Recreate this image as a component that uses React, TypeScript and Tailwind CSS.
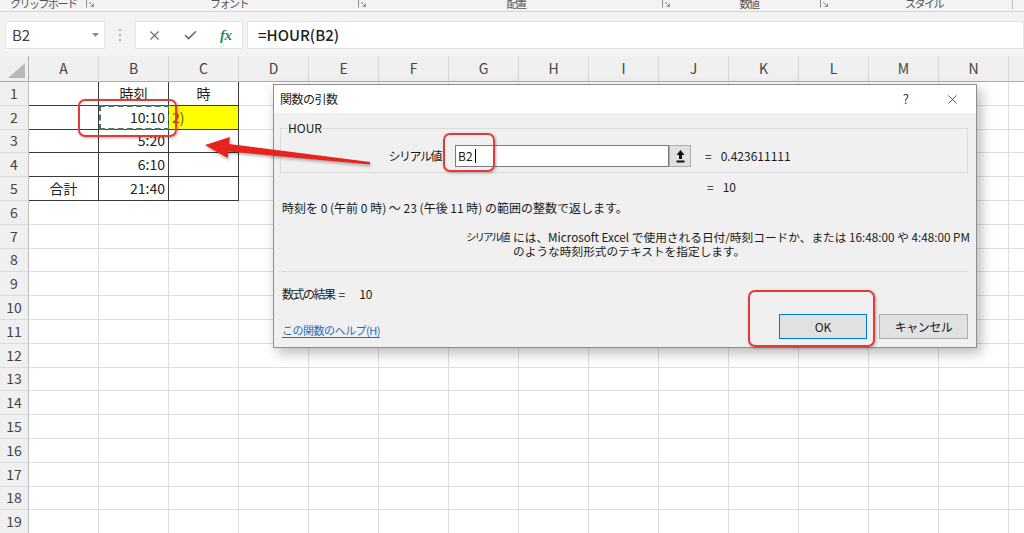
import { X, Check } from "lucide-react";
import clsx from "clsx";

const COLS = ["A", "B", "C", "D", "E", "F", "G", "H", "I", "J", "K", "L", "M", "N", "O"];
const ROWS = Array.from({ length: 19 }, (_, i) => i + 1);

type Align = "left" | "center" | "right";
const cells: Record<string, { text: string; align: Align }> = {
  B1: { text: "時刻", align: "center" },
  C1: { text: "時", align: "center" },
  B2: { text: "10:10", align: "right" },
  B3: { text: "5:20", align: "right" },
  B4: { text: "6:10", align: "right" },
  A5: { text: "合計", align: "center" },
  B5: { text: "21:40", align: "right" },
};

const alignClass: Record<Align, string> = {
  left: "justify-start",
  center: "justify-center",
  right: "justify-end",
};

const Launcher = ({ className }: { className?: string }) => (
  <svg className={className} width="9" height="9" viewBox="0 0 9 9">
    <path d="M0.5 8.5V0.5H8.5" fill="none" stroke="#8a8a8a" strokeWidth="1" />
    <path d="M3 3L7.5 7.5M7.5 4.5V7.5H4.5" fill="none" stroke="#8a8a8a" strokeWidth="1" />
  </svg>
);

const Ribbon = () => (
  <div className="h-[12px] bg-[#f3f3f3] border-b border-[#d4d4d4] overflow-hidden text-[11px] leading-[12px] tracking-[-1.5px] text-[#555]">
    <div className="flex items-start -mt-[3px] whitespace-nowrap">
      <span className="ml-[10px] w-[62px] text-center">クリップボード</span>
      <Launcher className="ml-[14px] mt-[2px]" />
      <span className="ml-[115px] w-[32px] text-center">フォント</span>
      <Launcher className="ml-[116px] mt-[2px]" />
      <span className="ml-[138px] w-[22px] text-center">配置</span>
      <Launcher className="ml-[135px] mt-[2px]" />
      <span className="ml-[67px] w-[22px] text-center">数値</span>
      <Launcher className="ml-[60px] mt-[2px]" />
      <span className="ml-[76px] w-[35px] text-center">スタイル</span>
      <span className="ml-[72px] w-px h-[12px] bg-[#bdbdbd]" />
    </div>
  </div>
);

const FormulaBar = () => (
  <div className="h-[44px] bg-[#f3f3f3] flex items-start pt-[9px]">
    <div className="ml-[5px] w-[100px] h-[28px] bg-white border border-[#e4e4e4] flex items-center pl-[6px] pr-[5px] text-[15px] text-[#444]">
      <span>B2</span>
      <svg className="ml-auto" width="7" height="4" viewBox="0 0 7 4">
        <path d="M0 0H7L3.5 4Z" fill="#8a8a8a" />
      </svg>
    </div>
    <div className="w-[30px] h-[28px] flex flex-col items-center justify-center gap-[3px]">
      <span className="w-[2px] h-[2px] bg-[#b0b0b0]" />
      <span className="w-[2px] h-[2px] bg-[#b0b0b0]" />
      <span className="w-[2px] h-[2px] bg-[#b0b0b0]" />
    </div>
    <div className="w-[108px] h-[28px] bg-white border border-[#e4e4e4] flex items-center">
      <X size={15} strokeWidth={1.7} className="ml-[11px] text-[#6a6a6a]" />
      <Check size={15} strokeWidth={2.6} className="ml-[21px] text-[#6a6a6a]" />
      <span className="ml-[22px] font-['Liberation_Serif',serif] italic text-[15px] font-semibold text-[#2f8a62] tracking-[-0.5px]">
        fx
      </span>
    </div>
    <div className="ml-[4px] flex-1 h-[28px] bg-white border border-[#e4e4e4] flex items-center pl-[10px] text-[15px] font-medium text-[#222]">
      =HOUR(B2)
    </div>
  </div>
);

const HeaderRow = () => (
  <div className="grid grid-cols-[29px_repeat(15,70px)] h-[26px]">
    <div className="relative bg-[#f0f0f0] border-r border-b border-[#ababab]">
      <svg className="absolute right-[3px] bottom-[3px]" width="17" height="15" viewBox="0 0 17 15">
        <path d="M17 0V15H0Z" fill="#b9b9b9" />
      </svg>
    </div>
    {COLS.map((c) => (
      <div
        key={c}
        className="flex items-center justify-center bg-[#f0f0f0] border-r border-b border-r-[#d6d6d6] border-b-[#ababab] text-[14px] text-[#444]"
      >
        {c}
      </div>
    ))}
  </div>
);

const Cell = ({ col, row }: { col: string; row: number }) => {
  const key = `${col}${row}`;
  const data = cells[key];
  const inTable = row <= 5 && (col === "A" || col === "B" || col === "C");
  return (
    <div
      className={clsx(
        "relative flex items-center border-r border-b px-[3px] text-[14px] text-[#222] whitespace-nowrap",
        inTable ? "border-[#3a3a3a]" : "border-[#dedede]",
        alignClass[data?.align ?? "left"],
        key === "C2" && "bg-[#ffff00]"
      )}
    >
      {data?.text}
      {key === "C2" && <span className="text-[#6e5410]">2)</span>}
      {key === "B2" && (
        <div className="absolute left-0 top-[-1px] w-[71px] h-[25px] border-2 border-dashed border-[#4a7560]" />
      )}
    </div>
  );
};

const SheetRow = ({ row }: { row: number }) => (
  <div className="grid grid-cols-[29px_repeat(15,70px)] h-[23.8px]">
    <div className="flex items-center justify-center bg-[#f0f0f0] border-r border-b border-r-[#bdbdbd] border-b-[#dadada] text-[14px] text-[#444]">
      {row}
    </div>
    {COLS.map((c) => (
      <Cell key={c} col={c} row={row} />
    ))}
  </div>
);

const RefIcon = () => (
  <svg width="9" height="13" viewBox="0 0 9 13">
    <path d="M4.5 0L8.5 5H6V9H3V5H0.5Z" fill="#111" />
    <rect x="0.5" y="10.5" width="8" height="2" fill="#111" />
  </svg>
);

const Dialog = () => (
  <div className="absolute left-[273px] top-[84px] w-[704px] h-[264px] border border-[#8e8e8e] bg-[#f0f0f0] shadow-[4px_5px_12px_rgba(0,0,0,0.28)] flex flex-col text-[12px] leading-[14px] text-[#1a1a1a]">
    <div className="h-[28px] bg-white flex items-center pl-[6px]">
      <span className="tracking-[-0.5px]">関数の引数</span>
      <span className="ml-auto text-[13px] text-[#333]">?</span>
      <X size={15} strokeWidth={1.2} className="ml-[36px] mr-[16px] text-[#222]" />
    </div>
    <div className="flex flex-col">
      <fieldset className="ml-[6px] mt-[8px] w-[688px] border border-[#dcdcdc] pb-[5px]">
        <legend className="ml-[7px] leading-[14px]">HOUR</legend>
        <div className="mt-[10px] flex items-center h-[22px]">
          <span className="w-[162px] text-right tracking-[-1.5px] pr-[2px]">シリアル値</span>
          <div className="ml-[12px] w-[214px] h-[22px] bg-white border border-[#7a7a7a] pl-[2px] flex items-center">
            B2
            <span className="ml-[2px] w-px h-[14px] bg-black" />
          </div>
          <div className="w-[22px] h-[22px] bg-[#e1e1e1] border border-[#adadad] flex items-center justify-center">
            <RefIcon />
          </div>
          <span className="ml-[14px]">=</span>
          <span className="ml-[9px]">0.423611111</span>
        </div>
      </fieldset>
      <div className="mt-[7px] pl-[433px] flex">
        <span>=</span>
        <span className="ml-[9px]">10</span>
      </div>
      <div className="mt-[7px] pl-[8px] whitespace-nowrap">
        時刻を 0 (午前 0 時) ～ 23 (午後 11 時) の範囲の整数で返します。
      </div>
      <div className="mt-[15px] pl-[192px] flex whitespace-nowrap">
        <span className="w-[47px] text-[10.5px] tracking-[-2px]">シリアル値</span>
        <div className="flex flex-col text-[11.7px] leading-[14px]">
          <div className="h-[14px]">には、Microsoft Excel で使用される日付/時刻コードか、または 16:48:00 や 4:48:00 PM</div>
          <div className="h-[14px]">のような時刻形式のテキストを指定します。</div>
        </div>
      </div>
      <div className="mt-[13px] ml-[8px] w-[686px] h-px bg-[#dcdcdc]" />
      <div className="mt-[15px] pl-[8px] flex whitespace-nowrap">
        <span className="tracking-[-1.5px]">数式の結果</span>
        <span className="ml-[4px]">=</span>
        <span className="ml-[14px]">10</span>
      </div>
      <div className="mt-[13px] flex items-start pl-[8px] pr-[8px]">
        <a className="pt-[9px] text-[11px] tracking-[-0.5px] text-[#1f6fb8] underline underline-offset-2">
          この関数のヘルプ(H)
        </a>
        <button className="ml-auto w-[88px] h-[25px] bg-[#e1e1e1] border border-[#0078d7] text-[12px]">OK</button>
        <button className="ml-[12px] w-[89px] h-[25px] bg-[#e1e1e1] border border-[#adadad] text-[12px] tracking-[-0.5px]">
          キャンセル
        </button>
      </div>
    </div>
  </div>
);

const Annotations = () => (
  <>
    <div className="absolute left-[78px] top-[99px] w-[99px] h-[38px] rounded-[7px] border-2 border-[#e23a3a] shadow-[1px_1px_3px_rgba(0,0,0,0.3)]" />
    <div className="absolute left-[443px] top-[133px] w-[52px] h-[39px] rounded-[7px] border-2 border-[#e23a3a] shadow-[1px_1px_3px_rgba(0,0,0,0.3)]" />
    <div className="absolute left-[748px] top-[290px] w-[127px] h-[57px] rounded-[7px] border-2 border-[#e23a3a] shadow-[1px_1px_3px_rgba(0,0,0,0.3)]" />
    <svg className="absolute left-0 top-0 pointer-events-none" width="1024" height="533" viewBox="0 0 1024 533">
      <polygon
        points="205,145 230,137 229,144 370,162 370,164.5 228.5,151.5 227.5,158"
        fill="#e8231c"
        style={{ filter: "drop-shadow(1px 2px 1.5px rgba(0,0,0,0.3))" }}
      />
    </svg>
  </>
);

export default function App() {
  return (
    <div className="relative w-[1024px] h-[533px] overflow-hidden bg-white font-['Noto_Sans_CJK_JP','Noto_Sans',sans-serif]">
      <Ribbon />
      <FormulaBar />
      <HeaderRow />
      {ROWS.map((r) => (
        <SheetRow key={r} row={r} />
      ))}
      <Dialog />
      <Annotations />
    </div>
  );
}
